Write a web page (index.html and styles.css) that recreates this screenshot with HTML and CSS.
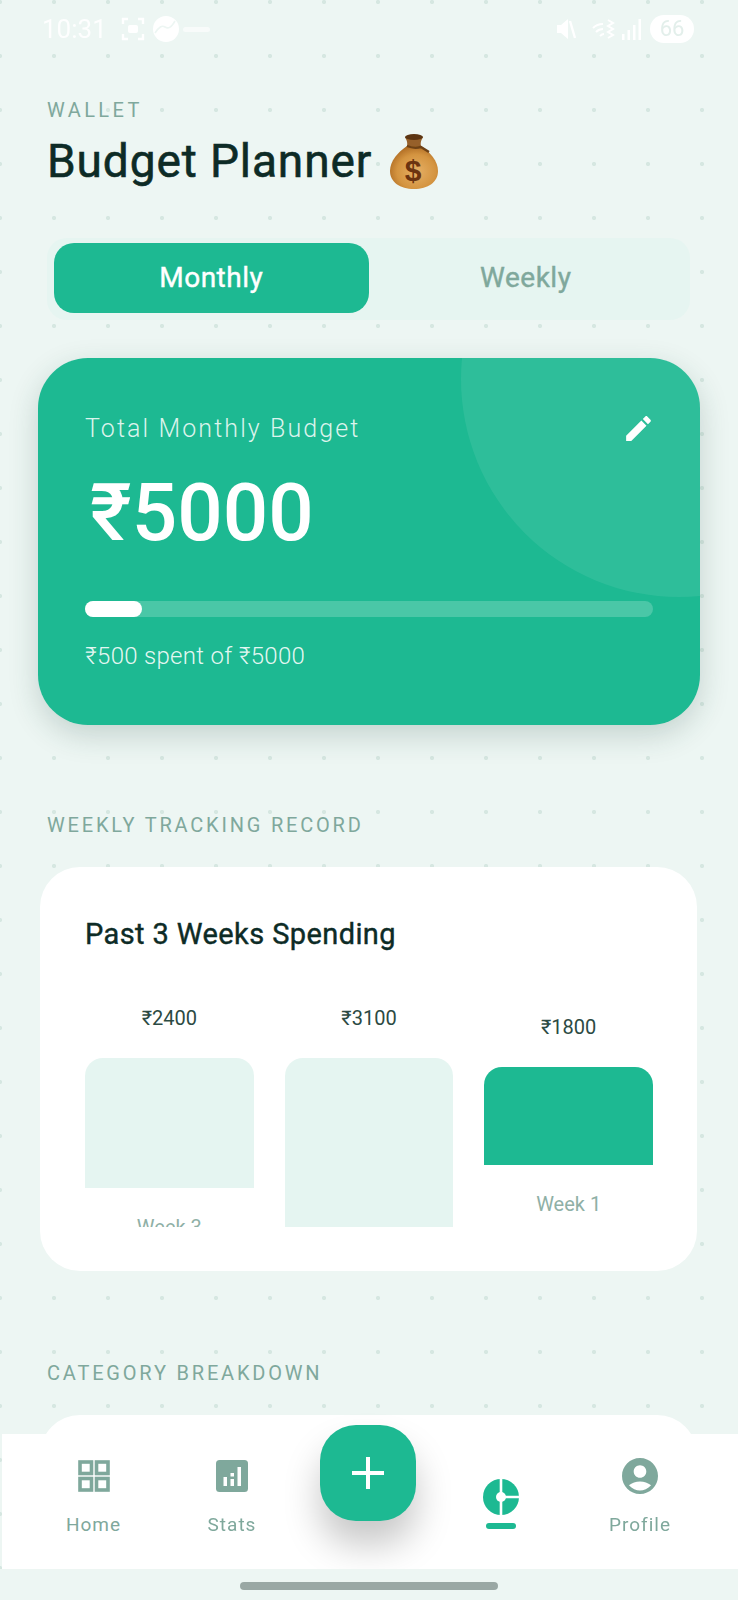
FILE: index.html
```html
<!DOCTYPE html>
<html lang="en">
<head>
  <meta charset="UTF-8">
  <meta name="viewport" content="width=device-width, initial-scale=1.0">
  <title>Budget Planner</title>
  <link rel="stylesheet" href="styles.css">
</head>
<body>
  <div class="content">
    <div class="statusbar">
      <div class="status-left">
        <span class="time">10:31</span>
        <svg class="st-shot" viewBox="0 0 24 24" fill="none" stroke="#fff" stroke-width="2.4">
          <path d="M2 7V2h5M17 2h5v5M22 17v5h-5M7 22H2v-5"/>
          <rect x="7" y="8" width="10" height="8" rx="2" fill="#fff" stroke="none"/>
        </svg>
        <svg class="st-circle" viewBox="0 0 26 26">
          <circle cx="13" cy="13" r="13" fill="#fff"/>
          <path d="M2 17c4-6 7-8 10-6s6 1 10-6" fill="none" stroke="#edf6f3" stroke-width="1.6"/>
        </svg>
        <span class="st-tiny"></span>
      </div>
      <div class="status-right">
        <svg class="st-mute" viewBox="0 0 20 24" fill="#fff">
          <path d="M1 8h4l7-6v20l-7-6H1z"/>
          <path d="M14 4l5 17" stroke="#fff" stroke-width="2.4"/>
        </svg>
        <svg class="st-wifi" viewBox="0 0 24 24" fill="none" stroke="#fff" stroke-width="2">
          <path d="M1 11c3-3 6-4 10-4M4 15c2-2 4-3 7-3M8 19c1-1 2-2 4-2"/>
          <path d="M16 3l5 3-5 3 5 3-5 3 5 3-5 3"/>
        </svg>
        <svg class="st-signal" viewBox="0 0 20 24" fill="#fff">
          <rect x="0" y="17" width="2.5" height="6"/>
          <rect x="5.5" y="13" width="2.5" height="10"/>
          <rect x="11" y="8" width="2.5" height="15"/>
          <rect x="16.5" y="2" width="2.5" height="21"/>
        </svg>
        <span class="battery">66</span>
      </div>
    </div>

    <div class="header">
      <div class="eyebrow">WALLET</div>
      <h1 class="page-title">
        Budget Planner
        <svg class="bag" viewBox="0 0 48 55">
          <defs>
            <radialGradient id="bagFill" cx="0.55" cy="0.6" r="0.62">
              <stop offset="0" stop-color="#e6b066"/>
              <stop offset="0.65" stop-color="#d49440"/>
              <stop offset="1" stop-color="#ad6a22"/>
            </radialGradient>
          </defs>
          <path d="M17 12C8 18 0 27 0 37c0 11 10 18 24 18s24-7 24-18c0-10-8-19-17-25z" fill="url(#bagFill)"/>
          <path d="M17 12c1-4-1-7-2-9h18c-1 2-3 5-2 9z" fill="#96602a"/>
          <ellipse cx="24" cy="3" rx="9" ry="3" fill="#5c3512"/>
          <path d="M17 12c5 2 10 2 14 1l8 5" fill="none" stroke="#6e4216" stroke-width="2.4"/>
          <text x="23" y="47" text-anchor="middle" class="bag-sign">$</text>
        </svg>
      </h1>
    </div>

    <div class="toggle">
      <div class="toggle-item active">Monthly</div>
      <div class="toggle-item">Weekly</div>
    </div>

    <div class="budget-card">
      <div class="budget-circle"></div>
      <div class="budget-top">
        <span class="budget-label">Total Monthly Budget</span>
        <svg class="edit-icon" viewBox="0 0 24 24" fill="#fff">
          <path d="M3 17.25V21h3.75L17.81 9.94l-3.75-3.75L3 17.25zM20.71 7.04c.39-.39.39-1.02 0-1.41l-2.34-2.34c-.39-.39-1.02-.39-1.41 0l-1.83 1.83 3.75 3.75 1.83-1.83z"/>
        </svg>
      </div>
      <div class="budget-amount">₹5000</div>
      <div class="progress"><div class="progress-fill" style="width: 10%"></div></div>
      <div class="budget-note">₹500 spent of ₹5000</div>
    </div>

    <div class="section-title first">WEEKLY TRACKING RECORD</div>
    <div class="card chart-card">
      <div class="card-title">Past 3 Weeks Spending</div>
      <div class="chart">
        <div class="chart-col">
          <div class="chart-value">₹2400</div>
          <div class="chart-bar" style="height: 130px"></div>
          <div class="chart-week">Week 3</div>
        </div>
        <div class="chart-col">
          <div class="chart-value">₹3100</div>
          <div class="chart-bar" style="height: 172px"></div>
        </div>
        <div class="chart-col current">
          <div class="chart-value">₹1800</div>
          <div class="chart-bar" style="height: 98px"></div>
          <div class="chart-week">Week 1</div>
        </div>
      </div>
    </div>

    <div class="section-title">CATEGORY BREAKDOWN</div>
    <div class="card category-card"></div>
  </div>

  <div class="navbar">
    <div class="nav-item">
      <svg class="nav-icon" viewBox="0 0 36 36" fill="none" stroke="#7fa89c" stroke-width="3.6">
        <rect x="4" y="4" width="11.5" height="11.5"/>
        <rect x="20.5" y="4" width="11.5" height="11.5"/>
        <rect x="4" y="20.5" width="11.5" height="11.5"/>
        <rect x="20.5" y="20.5" width="11.5" height="11.5"/>
      </svg>
      <span>Home</span>
    </div>
    <div class="nav-item">
      <svg class="nav-icon" viewBox="0 0 36 36">
        <rect x="2" y="2" width="32" height="32" rx="3.5" fill="#7fa89c"/>
        <rect x="9.5" y="19" width="3.5" height="9" fill="#fff"/>
        <rect x="16.5" y="21" width="3.5" height="7" fill="#fff"/>
        <rect x="16.5" y="15" width="3.5" height="3.5" fill="#fff"/>
        <rect x="23.5" y="9" width="3.5" height="19" fill="#fff"/>
      </svg>
      <span>Stats</span>
    </div>
    <div class="nav-item">
      <div class="fab">
        <svg class="fab-plus" viewBox="0 0 32 32" stroke="#fff" stroke-width="4">
          <path d="M16 0v32M0 16h32"/>
        </svg>
      </div>
    </div>
    <div class="nav-item nav-active">
      <svg class="nav-icon" viewBox="0 0 36 36">
        <circle cx="18" cy="18" r="18" fill="#1db992"/>
        <path d="M18 0v36M18 18h18" stroke="#fff" stroke-width="2.6"/>
        <circle cx="18" cy="18" r="5" fill="#fff"/>
      </svg>
      <div class="nav-line"></div>
    </div>
    <div class="nav-item">
      <svg class="nav-icon" viewBox="2 2 20 20" fill="#7fa89c">
        <path d="M12 2C6.48 2 2 6.48 2 12s4.48 10 10 10 10-4.48 10-10S17.52 2 12 2zm0 4c1.93 0 3.5 1.57 3.5 3.5S13.93 13 12 13s-3.5-1.57-3.5-3.5S10.07 6 12 6zm0 14c-2.03 0-4.43-.82-6.14-2.88C7.55 15.8 9.68 15 12 15s4.45.8 6.14 2.12C16.43 19.18 14.03 20 12 20z"/>
      </svg>
      <span>Profile</span>
    </div>
  </div>
  <div class="home-area">
    <div class="home-indicator"></div>
  </div>
</body>
</html>
```

FILE: styles.css
```css
body {
  font-family: Roboto, "Noto Sans", sans-serif;
  margin: 0;
  padding: 0;
  height: 1600px;
  overflow: hidden;
  background-color: #edf6f3;
  background-image: radial-gradient(circle, #d6e7e1 1.8px, transparent 2.4px);
  background-size: 54px 54px;
  background-position: -27px -25px;
  color: #0d2b26;
}
.content {
  height: 1434px;
  overflow: hidden;
}
.statusbar {
  height: 60px;
  display: flex;
  justify-content: space-between;
  align-items: center;
  padding: 0 44px 2px 42px;
  box-sizing: border-box;
  filter: blur(0.6px);
}
.status-left,
.status-right {
  display: flex;
  align-items: center;
}
.time {
  color: #fff;
  font-size: 26px;
  opacity: 0.9;
}
.st-shot {
  width: 24px;
  height: 24px;
  margin-left: 14px;
}
.st-circle {
  width: 26px;
  height: 26px;
  margin-left: 8px;
}
.st-tiny {
  width: 27px;
  height: 5px;
  margin-left: 4px;
  border-radius: 3px;
  background: #fff;
  opacity: 0.6;
}
.st-mute {
  width: 20px;
  height: 24px;
}
.st-wifi {
  width: 24px;
  height: 24px;
  margin-left: 16px;
}
.st-signal {
  width: 20px;
  height: 24px;
  margin-left: 6px;
}
.battery {
  width: 44px;
  height: 28px;
  line-height: 28px;
  margin-left: 8px;
  border-radius: 14px;
  background: #fff;
  color: #e3efeb;
  font-size: 22px;
  text-align: center;
}
.header {
  padding: 0 47px;
}
.eyebrow {
  margin-top: 38px;
  font-size: 20px;
  line-height: 24px;
  letter-spacing: 3.4px;
  color: #7fa89c;
}
.page-title {
  margin: 11px 0 -1px;
  font-size: 46px;
  line-height: 56px;
  font-weight: 400;
  letter-spacing: 0.9px;
  -webkit-text-stroke: 0.6px #0d2b26;
  display: flex;
  align-items: center;
  gap: 18px;
}
.bag {
  width: 48px;
  height: 55px;
}
.bag-sign {
  font-family: "Liberation Sans", sans-serif;
  font-size: 30px;
  font-weight: 700;
  letter-spacing: 0;
  stroke: none;
  -webkit-text-stroke: 0;
  fill: #6b3410;
}
.toggle {
  margin: 50px 48px 0 47px;
  height: 82px;
  padding: 5px 7px;
  box-sizing: border-box;
  display: flex;
  background: #e6f5f1;
  border-radius: 20px;
}
.toggle-item {
  flex: 1;
  height: 70px;
  line-height: 70px;
  text-align: center;
  font-size: 28px;
  font-weight: 400;
  letter-spacing: 0.5px;
  -webkit-text-stroke: 0.4px currentColor;
  color: #7fa89c;
  border-radius: 20px;
}
.toggle-item.active {
  background: #1db992;
  color: #fff;
}
.budget-card {
  margin: 38px 38px 0;
  height: 367px;
  padding: 54px 47px 0;
  box-sizing: border-box;
  position: relative;
  overflow: hidden;
  border-radius: 50px;
  background: #1db992;
  color: #fff;
  box-shadow: 0 10px 30px rgba(30, 70, 60, 0.2);
}
.budget-circle {
  position: absolute;
  top: -197px;
  right: -197px;
  width: 436px;
  height: 436px;
  border-radius: 50%;
  background: rgba(255, 255, 255, 0.08);
}
.budget-top {
  display: flex;
  justify-content: space-between;
  align-items: center;
  height: 32px;
  position: relative;
}
.budget-label {
  font-size: 25px;
  font-weight: 300;
  letter-spacing: 2.1px;
  color: rgba(255, 255, 255, 0.85);
}
.edit-icon {
  width: 33px;
  height: 33px;
  margin-right: -2px;
}
.budget-amount {
  margin-top: 21px;
  padding-left: 5px;
  font-size: 80px;
  line-height: 96px;
  font-weight: 500;
  position: relative;
}
.progress {
  margin-top: 40px;
  height: 16px;
  border-radius: 8px;
  background: rgba(255, 255, 255, 0.2);
  position: relative;
}
.progress-fill {
  height: 100%;
  border-radius: 8px;
  background: #fff;
}
.budget-note {
  margin-top: 25px;
  font-size: 24px;
  line-height: 28px;
  font-weight: 300;
  letter-spacing: 0.3px;
  color: rgba(255, 255, 255, 0.9);
}
.section-title {
  margin: 90px 47px 0;
  font-size: 20px;
  line-height: 24px;
  letter-spacing: 2.8px;
  color: #7fa89c;
}
.section-title.first {
  margin-top: 88px;
}
.card {
  margin: 30px 41px 0 40px;
  border-radius: 40px;
  background: #fff;
}
.chart-card {
  height: 404px;
  padding: 49px 44px 0 45px;
  box-sizing: border-box;
}
.card-title {
  font-size: 29px;
  line-height: 36px;
  font-weight: 400;
  letter-spacing: 0.4px;
  -webkit-text-stroke: 0.4px #0d2b26;
}
.chart {
  margin-top: 54px;
  height: 221px;
  overflow: hidden;
  display: grid;
  grid-template-columns: repeat(3, 1fr);
  gap: 31px;
}
.chart-col.current {
  padding-top: 9px;
}
.chart-value {
  font-size: 20px;
  line-height: 24px;
  text-align: center;
  color: #2c4a43;
}
.chart-bar {
  margin-top: 28px;
  border-radius: 18px 18px 0 0;
  background: #e5f5f1;
}
.current .chart-bar {
  background: #1db992;
}
.chart-week {
  margin-top: 27px;
  font-size: 20px;
  line-height: 24px;
  text-align: center;
  color: #8fb0a6;
}
.category-card {
  height: 200px;
}
.navbar {
  position: fixed;
  top: 1434px;
  left: 2px;
  right: 0;
  height: 135px;
  padding-left: 22px;
  display: grid;
  grid-template-columns: 139px 138px 134px 132px 146px;
  background: #fff;
}
.nav-item {
  display: flex;
  flex-direction: column;
  align-items: center;
  padding-top: 24px;
  font-size: 19px;
  letter-spacing: 1px;
  color: #7fa89c;
}
.nav-item span {
  margin-top: 19px;
  line-height: 24px;
}
.nav-icon {
  width: 36px;
  height: 36px;
}
.nav-active {
  padding-top: 45px;
}
.nav-line {
  width: 30px;
  height: 6px;
  margin-top: 8px;
  border-radius: 3px;
  background: #1db992;
}
.fab {
  width: 96px;
  height: 96px;
  margin-top: -33px;
  border-radius: 36px;
  background: #1db992;
  display: flex;
  align-items: center;
  justify-content: center;
  box-shadow: 0 24px 36px rgba(0, 0, 0, 0.22);
}
.fab-plus {
  width: 32px;
  height: 32px;
}
.home-area {
  position: fixed;
  top: 1569px;
  left: 0;
  right: 0;
  height: 31px;
  background: #edf6f3;
}
.home-indicator {
  width: 258px;
  height: 8px;
  margin: 13px 0 0 240px;
  border-radius: 4px;
  background: #9aa8a4;
}
```
